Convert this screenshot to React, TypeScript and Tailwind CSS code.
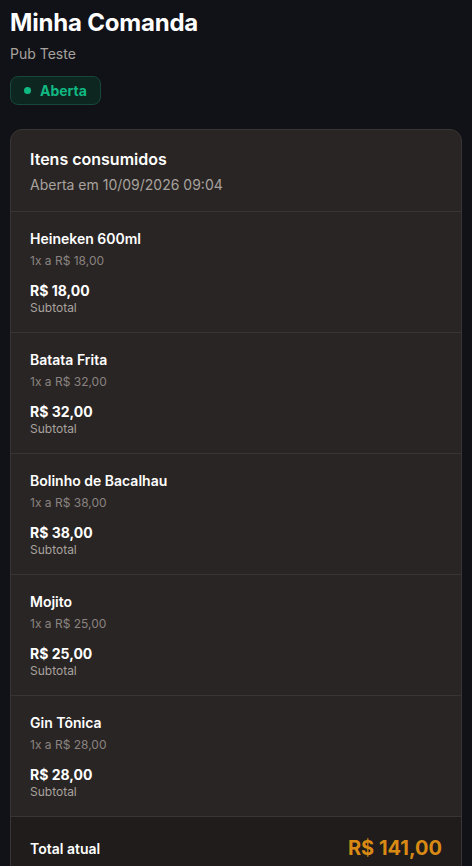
import React from 'react';

const items = [
  { name: 'Heineken 600ml', qty: 1, price: '18,00' },
  { name: 'Batata Frita', qty: 1, price: '32,00' },
  { name: 'Bolinho de Bacalhau', qty: 1, price: '38,00' },
  { name: 'Mojito', qty: 1, price: '25,00' },
  { name: 'Gin Tônica', qty: 1, price: '28,00' },
];

const App: React.FC = () => {
  return (
    <div
      className="min-h-screen bg-[#111218] text-white px-[10px] pt-[8px]"
      style={{ fontFamily: 'Inter, "Noto Sans", sans-serif' }}
    >
      <h1 className="text-[24px] font-bold leading-[30px] tracking-[-0.2px]">Minha Comanda</h1>
      <p className="mt-[7px] text-[14px] leading-[18px] text-[#a8a29e]">Pub Teste</p>
      <div className="mt-[13px] inline-flex items-center gap-[9px] h-[29px] px-[13px] rounded-lg border border-[#17473a] bg-[#0e2620] text-[#10b981] text-[14px] font-bold">
        <span className="w-[7px] h-[7px] rounded-full bg-[#10b981]" />
        Aberta
      </div>

      <div className="mt-[24px] rounded-xl border border-[#3a3533] bg-[#292524] overflow-hidden">
        <div className="px-[19px] pt-[19px] pb-[17px] border-b border-[#3a3533]">
          <h2 className="text-[16px] font-semibold leading-[20px]">Itens consumidos</h2>
          <p className="mt-[7px] text-[14px] leading-[18px] text-[#a8a29e]">Aberta em 10/09/2026 09:04</p>
        </div>
        {items.map((it) => (
          <div key={it.name} className="px-[19px] pt-[18px] pb-[17px] border-b border-[#3a3533] h-[121px]">
            <div className="text-[14px] font-semibold leading-[18px]">{it.name}</div>
            <div className="mt-[5px] text-[12px] leading-[16px] text-[#8a8380]">
              {it.qty}x a R$ {it.price}
            </div>
            <div className="mt-[13px] text-[14px] font-bold leading-[18px]">R$ {it.price}</div>
            <div className="text-[12px] leading-[16px] text-[#a8a29e]">Subtotal</div>
          </div>
        ))}
        <div className="flex items-center justify-between px-[19px] h-[62px] bg-[#1f1c1b]">
          <span className="text-[14px] font-semibold">Total atual</span>
          <span className="text-[20px] font-bold text-[#d98a14]">R$ 141,00</span>
        </div>
      </div>
    </div>
  );
};

export default App;
